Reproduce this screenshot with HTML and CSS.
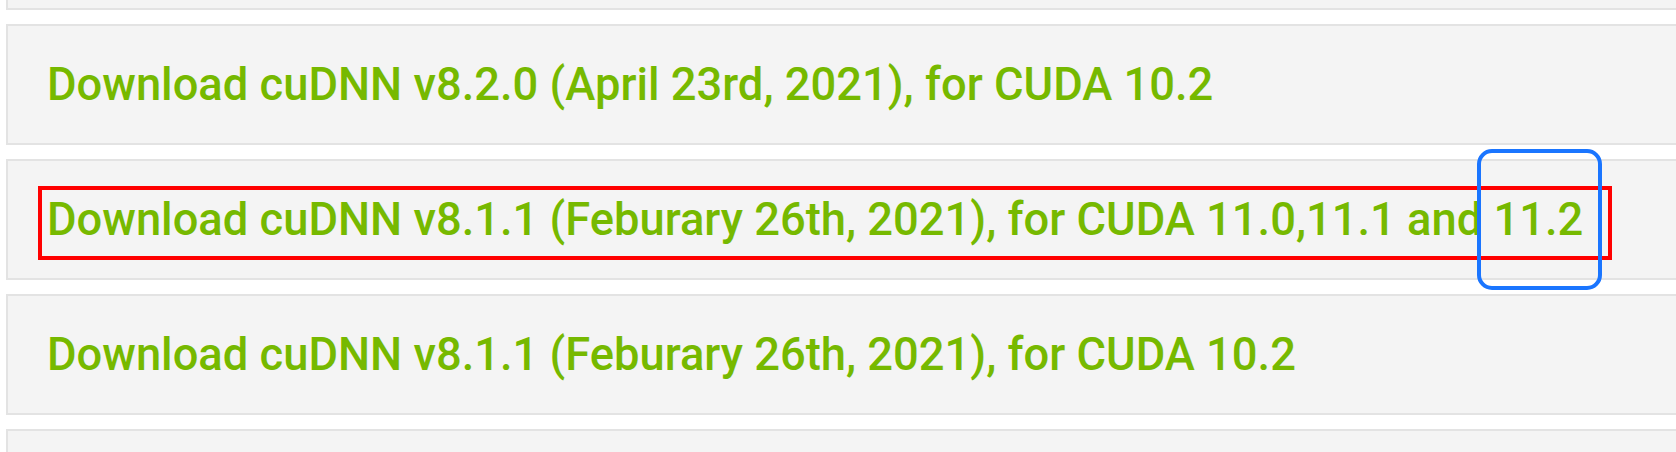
FILE: index.html
```html
<!DOCTYPE html>
<html lang="en">
<head>
<meta charset="utf-8">
<title>cuDNN Archive</title>
<link rel="stylesheet" href="styles.css">
</head>
<body>
<div class="page">
  <div class="list">
    <div class="panel"></div>
    <div class="panel"><a class="dl" href="#">Download cuDNN v8.2.0 (April 23rd, 2021), for CUDA 10.2</a></div>
    <div class="panel"><a class="dl" href="#">Download cuDNN v8.1.1 (Feburary 26th, 2021), for CUDA 11.0,11.1 and 11.2</a></div>
    <div class="panel"><a class="dl" href="#">Download cuDNN v8.1.1 (Feburary 26th, 2021), for CUDA 10.2</a></div>
    <div class="panel"></div>
  </div>
  <div class="mark mark-red"></div>
  <div class="mark mark-blue"></div>
</div>
</body>
</html>
```
FILE: styles.css
```css
html, body {
  margin: 0;
  padding: 0;
  background: #ffffff;
  overflow: hidden;
}
.page {
  position: relative;
  width: 1676px;
  height: 452px;
  overflow: hidden;
}
.list {
  display: flex;
  flex-direction: column;
  gap: 14px;
  margin-top: -111px;
  margin-left: 6px;
  margin-right: -40px;
}
.panel {
  box-sizing: border-box;
  height: 121px;
  background: #f4f4f4;
  border: 2px solid #e3e3e3;
  display: flex;
  align-items: center;
  padding-left: 39px;
}
.dl {
  font-family: Roboto, "Liberation Sans", sans-serif;
  font-weight: 500;
  font-size: 45.3px;
  color: #76b900;
  text-decoration: none;
  white-space: nowrap;
}
.mark {
  position: absolute;
  box-sizing: border-box;
}
.mark-red {
  left: 38px;
  top: 186px;
  width: 1574px;
  height: 74px;
  border: 4px solid #ff0000;
}
.mark-blue {
  left: 1477px;
  top: 149px;
  width: 125px;
  height: 141px;
  border: 4px solid #1a75ff;
  border-radius: 15px;
}
```
